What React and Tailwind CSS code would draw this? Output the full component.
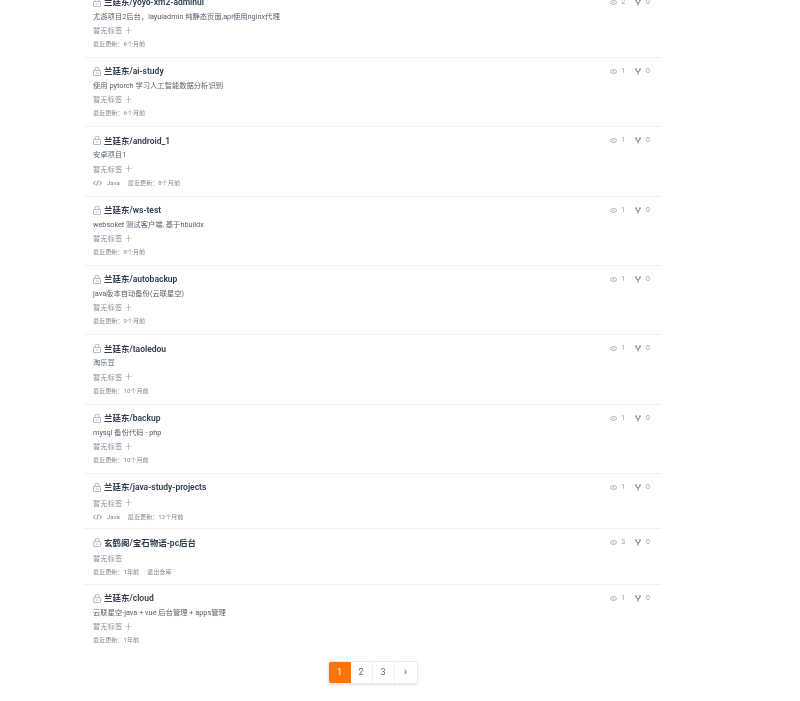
const Lock = () => (
  <svg width="8" height="9" viewBox="0 0 8 9" fill="none" stroke="#a3a9b3" strokeWidth="0.8" className="shrink-0">
    <rect x="0.5" y="3.5" width="7" height="5" rx="0.6" />
    <path d="M2 3.500V2.200a2 2 0 0 1 4 0V3.500" />
    <path d="M2.700 6h2.600" />
  </svg>
);
const Eye = () => (
  <svg width="7" height="5" viewBox="0 0 7 5" fill="none" stroke="#a9aeb6" strokeWidth="1" className="shrink-0">
    <ellipse cx="3.5" cy="2.5" rx="3" ry="1.9" />
    <circle cx="3.5" cy="2.5" r="0.7" fill="#a9aeb6" stroke="none" />
  </svg>
);
const Fork = () => (
  <svg width="6" height="7" viewBox="0 0 6 7" fill="none" stroke="#6b7480" strokeWidth="1" className="shrink-0">
    <circle cx="1" cy="1" r="0.7" fill="#6b7480" stroke="none" />
    <circle cx="5" cy="1" r="0.7" fill="#6b7480" stroke="none" />
    <path d="M1 1V2.400L3 4V6.500M5 1V2.400L3 4" />
  </svg>
);
const Code = () => (
  <svg width="9" height="6" viewBox="0 0 9 6" fill="none" stroke="#6f7680" strokeWidth="0.8" className="shrink-0">
    <path d="M2.400 0.800L0.500 3l1.900 2.200M6.600 0.800L8.500 3 6.600 5.200M5.200 0.400L3.800 5.600" />
  </svg>
);
const rows = [
  { t: "兰廷东/yoyo-xm2-adminui", d: "尤游项目2后台，layuiadmin 纯静态页面,api使用nginx代理", u: "6个月前", w: 2 },
  { t: "兰廷东/ai-study", d: "使用 pytorch 学习人工智能数据分析识别", u: "6个月前", w: 1 },
  { t: "兰廷东/android_1", d: "安卓项目1", u: "8个月前", w: 1, lang: "Java" },
  { t: "兰廷东/ws-test", d: "websoket 测试客户端, 基于hbuildx", u: "8个月前", w: 1 },
  { t: "兰廷东/autobackup", d: "java版本自动备份(云联星空)", u: "9个月前", w: 1 },
  { t: "兰廷东/taoledou", d: "淘乐豆", u: "10个月前", w: 1 },
  { t: "兰廷东/backup", d: "mysql 备份代码 - php", u: "10个月前", w: 1 },
  { t: "兰廷东/java-study-projects", u: "12个月前", w: 1, lang: "Java" },
  { t: "玄鹤阁/宝石物语-pc后台", u: "1年前", w: 3, quit: true, noPlus: true },
  { t: "兰廷东/cloud", d: "云联星空-java + vue 后台管理 + apps管理", u: "1年前", w: 1 },
];
function Row({ r, last }) {
  return (
    <div className={`flex justify-between pl-[9px] pr-[11px] ${last ? "" : "border-b border-[#eef0f3]"} ${r.d ? "h-[69.35px]" : "h-[55.3px]"} pt-[5.5px]`}>
      <div className="flex flex-col">
        <div className="flex items-center gap-[3px] h-[16px]">
          <Lock />
          <span className="text-[8.5px] font-semibold text-[#2f3b4b] leading-[16px]">{r.t}</span>
        </div>
        {r.d && <div className="text-[7.3px] text-[#555e6a] leading-[13px] -mt-[0.5px]">{r.d}</div>}
        <div className="flex items-center gap-[3px] text-[7.3px] text-[#8a919b] leading-[13px] mt-[1.5px]">
          <span>暂无标签</span>
          {!r.noPlus && <span className="text-[12px] leading-[12px] font-light text-[#a5abb4]">+</span>}
        </div>
        <div className="flex items-center text-[6.1px] text-[#808791] leading-[12px] mt-[1px]">
          {r.lang && (
            <span className="flex items-center gap-[5px] mr-[8px]">
              <Code />
              <span>{r.lang}</span>
            </span>
          )}
          <span>最近更新：{r.u}</span>
          {r.quit && <span className="ml-[8px]">退出仓库</span>}
        </div>
      </div>
      <div className="flex items-center h-[16px] text-[7px] leading-[7px] text-[#9aa0a9]">
        <Eye />
        <span className="ml-[4.5px] w-[4px] text-right">{r.w}</span>
        <span className="ml-[10px] flex"><Fork /></span>
        <span className="ml-[5px]">0</span>
      </div>
    </div>
  );
}
export default function App() {
  return (
    <div className="w-[800px] h-[701px] overflow-hidden bg-white blur-[0.3px] font-['Roboto','Noto_Sans_CJK_SC',sans-serif]">
      <div className="ml-[84px] w-[577px] -mt-[11.5px]">
        {rows.map((r, i) => (
          <Row key={r.t} r={r} last={i === rows.length - 1} />
        ))}
        <div className="flex justify-center mt-[7px]">
          <div className="flex h-[23px] rounded-[3px] border border-[#e8eaed] shadow-sm text-[9px] text-[#5f6873] overflow-hidden">
            <span className="w-[22px] bg-[#ff7300] text-white flex items-center justify-center">1</span>
            <span className="w-[22px] border-r border-[#eeeff2] flex items-center justify-center">2</span>
            <span className="w-[22px] border-r border-[#eeeff2] flex items-center justify-center">3</span>
            <span className="w-[22px] flex items-center justify-center text-[11px]">›</span>
          </div>
        </div>
      </div>
    </div>
  );
}
